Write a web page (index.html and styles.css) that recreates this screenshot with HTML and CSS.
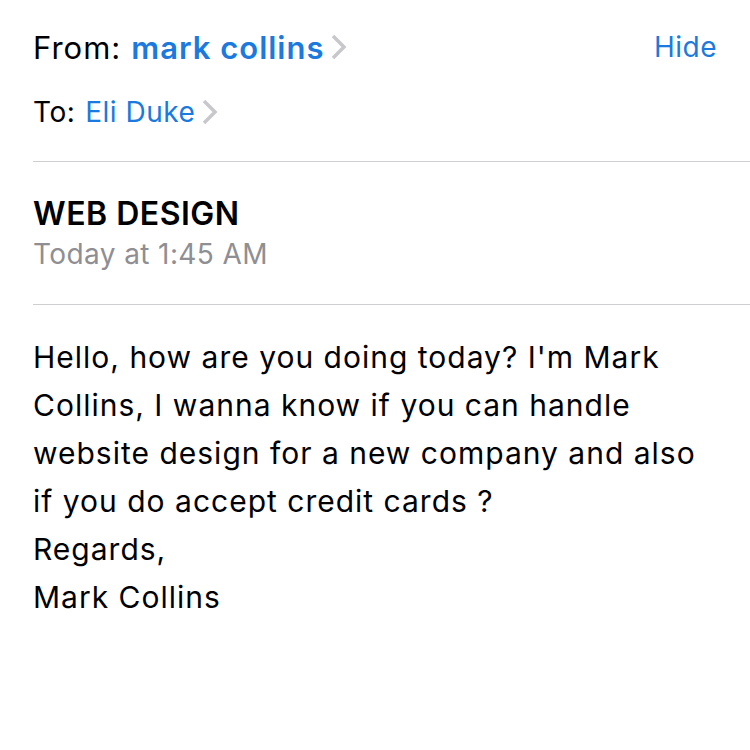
FILE: index.html
```html
<!DOCTYPE html>
<html lang="en">
<head>
    <meta charset="UTF-8">
    <meta name="viewport" content="width=device-width, initial-scale=1.0">
    <link rel="stylesheet" href="styles.css">
    <title>WEB DESIGN</title>
</head>
<body>

<div class="mail">
    <div class="header">
        <div class="row from">
            <span class="label">From:</span>
            <span class="name bold">mark collins</span>
            <svg class="chevron" width="18" height="28" viewBox="0 0 18 28"><path d="M3 3 L14 14 L3 25" fill="none" stroke="#c7c7cc" stroke-width="3.5"/></svg>
            <span class="hide">Hide</span>
        </div>
        <div class="row to">
            <span class="label">To:</span>
            <span class="name">Eli Duke</span>
            <svg class="chevron" width="18" height="28" viewBox="0 0 18 28"><path d="M3 3 L14 14 L3 25" fill="none" stroke="#c7c7cc" stroke-width="3.5"/></svg>
        </div>
    </div>

    <div class="subject">
        <div class="title">WEB DESIGN</div>
        <div class="date">Today at 1:45 AM</div>
    </div>

    <div class="body">
        Hello, how are you doing today? I'm Mark<br>
        Collins, I wanna know if you can handle<br>
        website design for a new company and also<br>
        if you do accept credit cards ?<br>
        Regards,<br>
        Mark Collins
    </div>
</div>

</body>
</html>
```

FILE: styles.css
```css
body {
    margin: 0;
    background-color: #fff;
    font-family: Inter, "Noto Sans", sans-serif;
    color: #000;
}

.mail {
    padding-left: 33px;
}

.header {
    padding-top: 27px;
    padding-bottom: 29px;
    padding-right: 33px;
    border-bottom: 1.5px solid #cfcfd2;
}

.row {
    display: flex;
    align-items: center;
}

.from {
    font-size: 31px;
    letter-spacing: 1px;
    height: 40px;
}

.to {
    font-size: 28px;
    letter-spacing: 0.5px;
    height: 40px;
    margin-top: 25px;
}

.label {
    margin-right: 10px;
}

.name {
    color: #1a7ae0;
}

.bold {
    font-weight: 600;
}

.chevron {
    margin-left: 6px;
}

.hide {
    margin-left: auto;
    color: #1a7ae0;
    font-size: 28px;
    letter-spacing: 0.5px;
}

.subject {
    padding-top: 32px;
    padding-bottom: 30px;
    border-bottom: 1.5px solid #cfcfd2;
}

.title {
    font-size: 32px;
    font-weight: 600;
    letter-spacing: 0.5px;
    line-height: 40px;
}

.date {
    font-size: 28px;
    letter-spacing: 0.4px;
    color: #8e8e93;
    line-height: 40px;
}

.body {
    padding-top: 28px;
    padding-right: 10px;
    font-size: 30px;
    letter-spacing: 1px;
    line-height: 48px;
}
```
